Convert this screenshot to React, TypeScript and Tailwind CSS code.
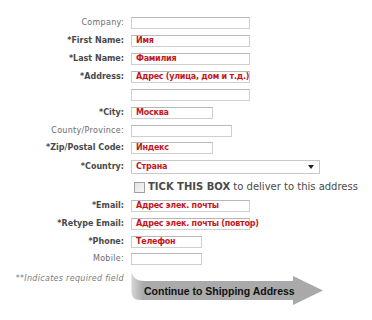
import { ReactNode } from "react";

type RowProps = {
	label: string;
	required?: boolean;
	h: string;
	children?: ReactNode;
};

function Row({ label, required = false, h, children }: RowProps) {
	return (
		<div className={`flex items-center ${h}`}>
			<div
				className={`w-[124px] shrink-0 text-right whitespace-nowrap ${
					required ? "font-bold text-[#4a4a4a]" : "text-[#6b6b6b] tracking-[0.3px]"
				}`}
			>
				{required ? "*" : ""}
				{label}:
			</div>
			<div className="ml-[7px] flex items-center">{children}</div>
		</div>
	);
}

// fake text box, a div so long values can spill over like the original
function Field({ w, value }: { w: string; value?: string }) {
	return (
		<div
			className={`${w} h-[12px] border border-[#cfcfcf] border-t-[#b8b8b8] bg-white pl-[4px] flex items-center whitespace-nowrap font-bold text-[#c4161c] text-[8px] leading-none tracking-[-0.25px]`}
		>
			{value}
		</div>
	);
}

function ArrowButton() {
	return (
		<div className="relative w-[194px] h-[36px]">
			<svg width="194" height="36" viewBox="0 0 194 36" className="absolute left-0 top-0">
				<defs>
					<linearGradient id="edge" x1="0" x2="1" y1="0" y2="0">
						<stop offset="0" stopColor="#d6d6d6" />
						<stop offset="0.06" stopColor="#ababab" />
						<stop offset="1" stopColor="#a9a9a9" />
					</linearGradient>
				</defs>
				<path
					d="M0.5 1 C2 7 6 10 14 10 L162 10 L162 5 L192 19.5 L162 34 L162 29 L9 29 Q0.5 29 0.5 21 Z"
					fill="url(#edge)"
				/>
			</svg>
			<span className="absolute left-[13px] top-[15px] text-[10.5px] leading-none font-bold text-[#111] whitespace-nowrap font-['Liberation_Sans',Arial,sans-serif]">
				Continue to Shipping Address
			</span>
		</div>
	);
}

export default function App() {
	return (
		<div className="w-[372px] h-[320px] bg-white pt-[14px] text-[8px] leading-none font-['DejaVu_Sans',Verdana,sans-serif] overflow-hidden">
			<Row label="Company" h="h-[18px]">
				<Field w="w-[119px]" />
			</Row>
			<Row label="First Name" required h="h-[18px]">
				<Field w="w-[119px]" value="Имя" />
			</Row>
			<Row label="Last Name" required h="h-[18px]">
				<Field w="w-[119px]" value="Фамилия" />
			</Row>
			<Row label="Address" required h="h-[18px]">
				<Field w="w-[119px]" value="Адрес (улица, дом и т.д.)" />
			</Row>
			<div className="flex items-center h-[18px]">
				<div className="w-[131px] shrink-0" />
				<Field w="w-[119px]" />
			</div>
			<Row label="City" required h="h-[18px]">
				<Field w="w-[82px]" value="Москва" />
			</Row>
			<Row label="County/Province" h="h-[17px]">
				<Field w="w-[101px]" />
			</Row>
			<Row label="Zip/Postal Code" required h="h-[17px]">
				<Field w="w-[82px]" value="Индекс" />
			</Row>
			<Row label="Country" required h="h-[21px]">
				<div className="w-[189px] h-[14px] border border-[#c8c8c8] bg-white pl-[4px] pr-[5px] flex items-center justify-between font-bold text-[#c4161c] text-[8px] tracking-[-0.25px]">
					<span>Страна</span>
					<svg width="6" height="4" viewBox="0 0 6 4">
						<path d="M0 0 L6 0 L3 4 Z" fill="#222" />
					</svg>
				</div>
			</Row>
			<div className="flex items-center h-[20px]">
				<div className="w-[134px] shrink-0" />
				<div className="w-[11px] h-[11px] border border-[#a0a0a0] bg-gradient-to-br from-[#e4e4e4] to-[#f6f6f6] shrink-0" />
				<div className="ml-[3px] text-[10px] text-[#4a4a4a] whitespace-nowrap">
					<span className="font-bold">TICK THIS BOX</span> to deliver to this address
				</div>
			</div>
			<Row label="Email" required h="h-[18px]">
				<Field w="w-[119px]" value="Адрес элек. почты" />
			</Row>
			<Row label="Retype Email" required h="h-[18px]">
				<Field w="w-[119px]" value="Адрес элек. почты (повтор)" />
			</Row>
			<Row label="Phone" required h="h-[17px]">
				<Field w="w-[71px]" value="Телефон" />
			</Row>
			<Row label="Mobile" h="h-[18px]">
				<Field w="w-[71px]" />
			</Row>
			<div className="flex mt-[3px]">
				<div className="w-[124px] shrink-0 text-right italic text-[#7a7a7a] whitespace-nowrap pt-[4px] tracking-[0.3px]">
					**Indicates required field
				</div>
				<div className="ml-[7px]">
					<ArrowButton />
				</div>
			</div>
		</div>
	);
}
